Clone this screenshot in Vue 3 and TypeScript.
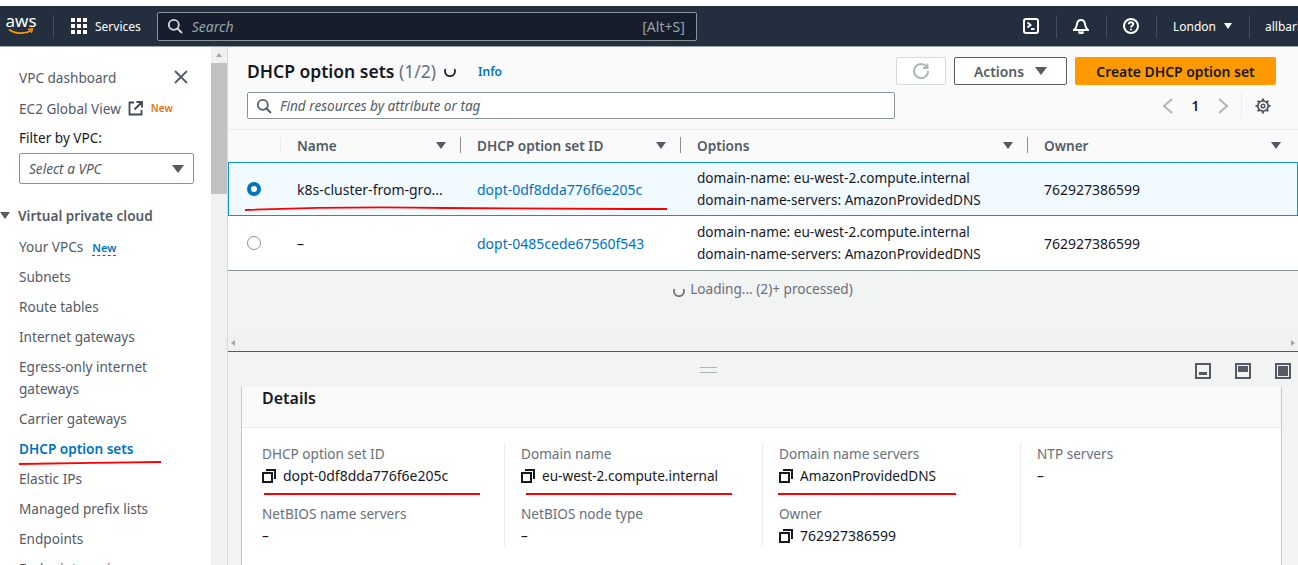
<template>
  <div class="page">
    <div class="top-strip"></div>
    <header class="nav">
      <div class="logo">
        <span class="logo-text">aws</span>
        <svg class="smile" width="26" height="8" viewBox="0 0 26 8"><path d="M1 1.5C7 6 17 6.5 23 2.5" fill="none" stroke="#f90" stroke-width="1.7"/><path d="M20 1.2l4.4-.4-1 4" fill="none" stroke="#f90" stroke-width="1.4"/></svg>
      </div>
      <span class="nav-sep first"></span>
      <svg class="grid-icon" width="16" height="16" viewBox="0 0 16 16" fill="#fff">
        <rect v-for="c in gridCells" :key="c.x + '-' + c.y" :x="c.x" :y="c.y" width="4" height="4" />
      </svg>
      <span class="services">Services</span>
      <div class="search">
        <svg width="16" height="16" viewBox="0 0 16 16" fill="none" stroke="#d5dbdb" stroke-width="1.8"><circle cx="6.8" cy="6.8" r="5"/><path d="M10.5 10.5 15 15"/></svg>
        <span class="search-text">Search</span>
        <span class="search-key">[Alt+S]</span>
      </div>
      <div class="nav-right">
        <svg class="nav-icon" width="16" height="16" viewBox="0 0 16 16" fill="none" stroke="#fff" stroke-width="2"><rect x="1" y="1" width="14" height="14" rx="2"/><path d="M4.5 4.5 7.5 7l-3 2.5M8 11h3.5"/></svg>
        <span class="nav-sep"></span>
        <svg class="nav-icon" width="16" height="16" viewBox="0 0 16 16" fill="none" stroke="#fff" stroke-width="2"><path d="M1 12c2-1.400 2.600-3 2.800-5C4.100 4 5.600 2 8 2s3.900 2 4.200 5c.2 2 .8 3.600 2.800 5Z"/><path d="M6 13.500a2 2 0 0 0 4 0" fill="#fff"/></svg>
        <span class="nav-sep"></span>
        <svg class="nav-icon" width="16" height="16" viewBox="0 0 16 16" fill="none" stroke="#fff" stroke-width="2"><circle cx="8" cy="8" r="7"/><path d="M5.800 6.200C5.800 5 6.800 4.200 8 4.200s2.200.8 2.200 2C10.200 7.800 8 7.800 8 9.500"/><path d="M8 10.800v1.500"/></svg>
        <span class="nav-sep"></span>
        <span class="region">London</span>
        <span class="caret white"></span>
        <span class="nav-sep"></span>
        <span class="account">allbarbara</span>
      </div>
    </header>

    <div class="body">
      <aside class="sidebar">
        <div class="side-top">
          <span>VPC dashboard</span>
          <svg width="14" height="14" viewBox="0 0 14 14" fill="none" stroke="#545b64" stroke-width="1.800"><path d="M1 1l12 12M13 1 1 13"/></svg>
        </div>
        <div class="side-row">
          <span>EC2 Global View</span>
          <svg class="ext" width="15" height="15" viewBox="0 0 15 15" fill="none" stroke="#414750" stroke-width="1.800"><path d="M6 1.500H1.500v12h12V9M8.500 1h5.500v5.500M14 1 6.500 8.500"/></svg>
          <span class="new-orange">New</span>
        </div>
        <div class="side-label">Filter by VPC:</div>
        <div class="vpc-select">
          <span>Select a VPC</span>
          <span class="caret"></span>
        </div>
        <div class="section-head"><span class="caret section-caret"></span>Virtual private cloud</div>
        <ul class="side-list">
          <li v-for="item in navItems" :key="item" :class="{ active: item === 'DHCP option sets', two: item.length > 25 }">
            {{ item }}<span v-if="item === 'Your VPCs'" class="new-blue">New</span>
          </li>
        </ul>
      </aside>
      <div class="scroll-track">
        <span class="arrow-up"></span>
        <div class="scroll-thumb"></div>
      </div>

      <main class="main">
        <section class="upper">
          <div class="tbl-header">
            <div class="title-row">
              <h1 class="title">DHCP option sets <span class="count">(1/2)</span></h1>
              <svg class="spin" width="12" height="12" viewBox="0 0 12 12" fill="none" stroke="#16191f" stroke-width="1.700"><path d="M1.500 4a5 5 0 1 0 9 0"/></svg>
              <span class="info">Info</span>
              <button class="btn refresh">
                <svg width="18" height="18" viewBox="0 0 18 18" fill="none" stroke="#aab7b8" stroke-width="2"><path d="M15 5.500A7 7 0 1 0 16 9"/><path d="M15.500 1.500v4.500H11"/></svg>
              </button>
              <button class="btn actions">Actions<span class="caret"></span></button>
              <button class="btn create">Create DHCP option set</button>
            </div>
            <div class="filter-row">
              <div class="filter-input">
                <svg width="16" height="16" viewBox="0 0 16 16" fill="none" stroke="#545b64" stroke-width="1.800"><circle cx="6.800" cy="6.800" r="5"/><path d="M10.500 10.500 15 15"/></svg>
                <span>Find resources by attribute or tag</span>
              </div>
              <div class="pager">
                <svg width="12" height="16" viewBox="0 0 12 16" fill="none" stroke="#aab7b8" stroke-width="2"><path d="M10 1 2 8l8 7"/></svg>
                <span class="page-num">1</span>
                <svg width="12" height="16" viewBox="0 0 12 16" fill="none" stroke="#aab7b8" stroke-width="2"><path d="m2 1 8 7-8 7"/></svg>
                <span class="pager-sep"></span>
                <svg width="16" height="16" viewBox="0 0 16 16" fill="none" stroke="#545b64"><circle cx="8" cy="8" r="5.200" stroke-width="1.800"/><circle cx="8" cy="8" r="1.800" stroke-width="1.600"/><path stroke-width="2.200" d="M8 .5V3M8 13v2.500M.5 8H3M13 8h2.500M2.700 2.700l1.800 1.800M11.500 11.500l1.800 1.800M13.300 2.700l-1.800 1.800M4.500 11.500l-1.800 1.800"/></svg>
              </div>
            </div>
          </div>

          <div class="table">
            <div class="t-row t-head">
              <div class="th first-col"></div>
              <div v-for="col in columns" :key="col" class="th">
                <span>{{ col }}</span>
                <span class="sort"></span>
              </div>
            </div>
            <div v-for="row in rows" :key="row.id" class="t-row data" :class="{ selected: row.selected }">
              <div class="td first-col"><span class="radio" :class="{ on: row.selected }"></span></div>
              <div class="td num">{{ row.name }}</div>
              <div class="td link num">{{ row.id }}</div>
              <div class="td options">
                <div>domain-name: eu-west-2.compute.internal</div>
                <div>domain-name-servers: AmazonProvidedDNS</div>
              </div>
              <div class="td num">762927386599</div>
            </div>
          </div>

          <div class="loading">
            <svg width="12" height="12" viewBox="0 0 12 12" fill="none" stroke="#687078" stroke-width="1.700"><path d="M1.500 4a5 5 0 1 0 9 0"/></svg>
            <span>Loading... (2)+ processed)</span>
          </div>
          <div class="h-scroll"><span class="arrow-left"></span><span class="arrow-right"></span></div>
        </section>

        <div class="split-bar">
          <span class="handle"></span>
          <div class="split-icons">
            <svg v-for="p in splitIcons" :key="p.y + p.h" width="16" height="16" viewBox="0 0 16 16">
              <rect x="1" y="1" width="14" height="14" fill="none" stroke="#545b64" stroke-width="2"/>
              <rect :x="p.x" :y="p.y" :width="p.w" :height="p.h" fill="#545b64"/>
            </svg>
          </div>
        </div>

        <section class="details">
          <h2 class="details-title">Details</h2>
          <div class="details-grid">
            <div v-for="col in detailCols" :key="col[0].label" class="d-col">
              <div v-for="f in col" :key="f.label" class="field">
                <div class="f-label">{{ f.label }}</div>
                <div class="f-value" :class="{ num: f.num }">
                  <svg v-if="f.copy" width="14" height="14" viewBox="0 0 14 14" fill="none" stroke="#16191f" stroke-width="2"><rect x="1" y="4" width="9" height="9"/><path d="M4 1h9v9"/></svg>
                  <span>{{ f.value }}</span>
                </div>
              </div>
            </div>
          </div>
        </section>
      </main>
    </div>

    <!-- red pen marks drawn over the screenshot -->
    <svg class="marks" width="1298" height="565" viewBox="0 0 1298 565" fill="none" stroke="#f00" stroke-width="1.800">
      <path d="M245 210c80-3 140-3 200-2 80 1 150 1 222 1"/>
      <path d="M19 464c40-1 100-1 142-2"/>
      <path d="M264 494h216"/>
      <path d="M526 494h206"/>
      <path d="M778 494h178"/>
    </svg>
  </div>
</template>

<script setup lang="ts">
interface Row {
  name: string
  id: string
  selected: boolean
}

interface Field {
  label: string
  value: string
  copy?: boolean
  num?: boolean
}

const gridCells: { x: number; y: number }[] = []
for (let y = 0; y < 3; y++) {
  for (let x = 0; x < 3; x++) gridCells.push({ x: x * 6, y: y * 6 })
}

const navItems = [
  'Your VPCs',
  'Subnets',
  'Route tables',
  'Internet gateways',
  'Egress-only internet gateways',
  'Carrier gateways',
  'DHCP option sets',
  'Elastic IPs',
  'Managed prefix lists',
  'Endpoints',
  'Endpoint services'
]

const columns = ['Name', 'DHCP option set ID', 'Options', 'Owner']

const rows: Row[] = [
  { name: 'k8s-cluster-from-gro...', id: 'dopt-0df8dda776f6e205c', selected: true },
  { name: '–', id: 'dopt-0485cede67560f543', selected: false }
]

const splitIcons = [
  { x: 4, y: 9, w: 8, h: 3 },
  { x: 3, y: 3, w: 10, h: 6 },
  { x: 3, y: 3, w: 10, h: 10 }
]

const detailCols: Field[][] = [
  [
    { label: 'DHCP option set ID', value: 'dopt-0df8dda776f6e205c', copy: true, num: true },
    { label: 'NetBIOS name servers', value: '–' }
  ],
  [
    { label: 'Domain name', value: 'eu-west-2.compute.internal', copy: true },
    { label: 'NetBIOS node type', value: '–' }
  ],
  [
    { label: 'Domain name servers', value: 'AmazonProvidedDNS', copy: true },
    { label: 'Owner', value: '762927386599', copy: true, num: true }
  ],
  [{ label: 'NTP servers', value: '–' }]
]
</script>

<style>
html,
body {
  margin: 0;
  overflow: hidden;
}
</style>

<style scoped>
.page {
  position: relative;
  width: 1298px;
  height: 565px;
  overflow: hidden;
  display: flex;
  flex-direction: column;
  font-family: "Noto Sans", "Open Sans", sans-serif;
  font-size: 13.6px;
  color: #16191f;
  background: #f2f3f3;
}

.num {
  font-size: 14px;
}

.top-strip {
  height: 6px;
  flex: none;
  background: #fff;
}

.nav {
  flex: none;
  height: 41px;
  display: flex;
  align-items: center;
  background: #232f3e;
  color: #fff;
  border-bottom: 1px solid #9aa3ab;
  box-sizing: border-box;
  padding-left: 6px;
}

.logo {
  width: 30px;
  display: flex;
  flex-direction: column;
  align-items: center;
  line-height: 1;
}

.logo-text {
  font-size: 17px;
  line-height: 14px;
  margin-top: -3px;
}

.nav-sep {
  width: 1px;
  height: 23px;
  flex: none;
  background: #414d5c;
}

.nav-sep.first {
  margin-left: 17px;
}

.grid-icon {
  margin-left: 17px;
}

.services {
  margin-left: 8px;
  font-size: 12px;
  color: #fff;
}

.search {
  width: 540px;
  height: 29px;
  margin-left: 16px;
  box-sizing: border-box;
  padding: 0 11px 0 9px;
  display: flex;
  align-items: center;
  background: #161e2d;
  border: 1px solid #879596;
  border-radius: 2px;
}

.search-text {
  margin-left: 9px;
  font-size: 14px;
  font-style: italic;
  color: #95a5a6;
}

.search-key {
  margin-left: auto;
  font-size: 14px;
  color: #95a5a6;
}

.nav-right {
  margin-left: auto;
  width: 291px;
  flex: none;
  display: flex;
  align-items: center;
}

.nav-icon {
  margin: 0 17px 0 16px;
  flex: none;
}

.region {
  margin-left: 16px;
  font-size: 12px;
}

.caret {
  display: inline-block;
  width: 0;
  height: 0;
  border-left: 6px solid transparent;
  border-right: 6px solid transparent;
  border-top: 8px solid #545b64;
}

.caret.white {
  border-left-width: 4px;
  border-right-width: 4px;
  border-top: 6px solid #fff;
  margin: 0 17px 0 8px;
}

.account {
  margin-left: 15px;
  font-size: 12px;
  white-space: nowrap;
}

.body {
  flex: 1;
  display: flex;
  min-height: 0;
}

.sidebar {
  width: 211px;
  flex: none;
  background: #fff;
  box-sizing: border-box;
  padding: 19px 0 0 19px;
  color: #545b64;
}

.side-top {
  display: flex;
  align-items: center;
  justify-content: space-between;
  height: 22px;
  padding-right: 23px;
}

.side-row {
  display: flex;
  align-items: center;
  height: 22px;
  margin-top: 9px;
}

.ext {
  margin-left: 7px;
}

.new-orange {
  margin-left: 8px;
  font-size: 10px;
  font-weight: 600;
  color: #ec7211;
}

.side-label {
  margin-top: 8px;
  line-height: 22px;
  color: #16191f;
}

.vpc-select {
  width: 175px;
  height: 31px;
  margin-top: 4px;
  box-sizing: border-box;
  padding: 0 9px;
  display: flex;
  align-items: center;
  justify-content: space-between;
  border: 1px solid #879596;
  border-radius: 2px;
  font-style: italic;
}

.section-head {
  margin: 20px 0 0 -19px;
  display: flex;
  align-items: center;
  height: 22px;
  font-weight: 600;
}

.section-caret {
  margin-right: 8px;
  border-left-width: 5px;
  border-right-width: 5px;
  border-top-width: 7px;
}

.side-list {
  list-style: none;
  margin: 10px 0 0;
  padding: 0 40px 0 0;
}

.side-list li {
  height: 22px;
  line-height: 22px;
  margin-bottom: 8px;
}

.side-list li.two {
  height: 44px;
}

.side-list li.active {
  font-weight: 600;
  color: #0073bb;
}

.new-blue {
  margin-left: 9px;
  font-size: 11px;
  font-weight: 600;
  line-height: 1;
  color: #0073bb;
  border-bottom: 1px dashed #0073bb;
}

.scroll-track {
  width: 16px;
  flex: none;
  background: #f1f1f1;
  border-right: 1px solid #d5dbdb;
  display: flex;
  flex-direction: column;
  align-items: center;
}

.arrow-up {
  margin-top: 6px;
  border-left: 3px solid transparent;
  border-right: 3px solid transparent;
  border-bottom: 4px solid #a3a3a3;
}

.scroll-thumb {
  width: 100%;
  height: 131px;
  margin-top: 6px;
  background: #c1c1c1;
}

.main {
  flex: 1;
  min-width: 0;
  display: flex;
  flex-direction: column;
}

.upper {
  flex: none;
  display: flex;
  flex-direction: column;
  border-bottom: 1px solid #545b64;
}

.tbl-header {
  height: 82px;
  box-sizing: border-box;
  padding: 10px 22px 0 19px;
  background: #fafafa;
}

.title-row {
  display: flex;
  align-items: center;
  height: 28px;
}

.title {
  margin: 0;
  font-size: 17.5px;
  font-weight: 600;
  line-height: 28px;
}

.count {
  font-weight: 400;
  color: #687078;
}

.spin {
  margin-left: 8px;
}

.info {
  margin-left: 22px;
  font-size: 12px;
  font-weight: 600;
  color: #0073bb;
}

.btn {
  height: 28px;
  box-sizing: border-box;
  border-radius: 2px;
  font-family: inherit;
  font-size: 13.9px;
  font-weight: 600;
  display: flex;
  align-items: center;
  justify-content: center;
  padding: 0;
}

.refresh {
  width: 50px;
  margin-left: auto;
  background: #fff;
  border: 1px solid #d5dbdb;
}

.actions {
  width: 113px;
  margin-left: 8px;
  gap: 11px;
  background: #fff;
  border: 1px solid #545b64;
  color: #545b64;
}

.create {
  width: 201px;
  margin-left: 8px;
  background: #f90;
  border: 1px solid #f90;
  color: #16191f;
}

.filter-row {
  display: flex;
  align-items: center;
  margin-top: 7px;
}

.filter-input {
  width: 648px;
  height: 27px;
  box-sizing: border-box;
  padding: 0 8px;
  display: flex;
  align-items: center;
  gap: 8px;
  background: #fff;
  border: 1px solid #879596;
  border-radius: 2px;
  font-style: italic;
  color: #545b64;
}

.pager {
  margin-left: auto;
  display: flex;
  align-items: center;
  margin-right: 5px;
  height: 27px;
}

.page-num {
  width: 43px;
  text-align: center;
  font-weight: 600;
}

.pager-sep {
  width: 1px;
  height: 27px;
  background: #eaeded;
  margin: 0 13px 0 12px;
}

.t-row {
  display: grid;
  grid-template-columns: 53px 180px 220px 347px 1fr;
  background: #fff;
}

.t-head {
  height: 33px;
  background: #fafafa;
  border-top: 1px solid #eaeded;
  padding-bottom: 2px;
  box-sizing: border-box;
  align-items: center;
  font-weight: 600;
  color: #545b64;
}

.th {
  display: flex;
  align-items: center;
  justify-content: space-between;
  padding: 0 14px 0 16px;
  border-right: 1px solid #879596;
  height: 16px;
  box-sizing: border-box;
}

.th:last-child {
  border-right: 0;
  padding-right: 17px;
}

.th.first-col {
  border-right-color: #eaeded;
}

.sort {
  border-left: 5px solid transparent;
  border-right: 5px solid transparent;
  border-top: 7px solid #545b64;
}

.data {
  height: 55px;
  box-sizing: border-box;
  align-items: center;
  border-bottom: 1px solid #879596;
}

.data.selected {
  height: 54px;
  background: #f1faff;
  border-bottom: 0;
  box-shadow: inset 0 0 0 1px #0a97b8;
}

.td {
  padding: 0 16px;
  white-space: nowrap;
  color: #16191f;
}

.td.link {
  color: #0073bb;
}

.td.options {
  line-height: 22px;
}

.first-col {
  padding: 0;
}

.radio {
  display: block;
  width: 14px;
  height: 14px;
  margin-left: 19px;
  margin-top: -1px;
  box-sizing: border-box;
  border: 1px solid #879596;
  border-radius: 50%;
  background: #fff;
}

.radio.on {
  border: 4px solid #0073bb;
}

.loading {
  height: 64px;
  box-sizing: border-box;
  padding-top: 8px;
  display: flex;
  align-items: flex-start;
  justify-content: center;
  gap: 5px;
  line-height: 20px;
  color: #687078;
  background: #f2f3f3;
}

.loading svg {
  margin-top: 6px;
}

.h-scroll {
  height: 16px;
  display: flex;
  align-items: center;
  justify-content: space-between;
  padding: 0 3px;
  background: #f1f1f1;
}

.arrow-left {
  border-top: 3px solid transparent;
  border-bottom: 3px solid transparent;
  border-right: 4px solid #a3a3a3;
}

.arrow-right {
  border-top: 3px solid transparent;
  border-bottom: 3px solid transparent;
  border-left: 4px solid #a3a3a3;
}

.split-bar {
  flex: none;
  height: 35px;
  position: relative;
  display: flex;
  align-items: center;
  padding-left: 472px;
}

.handle {
  width: 17px;
  height: 4px;
  border-top: 1px solid #aab7b8;
  border-bottom: 1px solid #aab7b8;
}

.split-icons {
  position: absolute;
  right: 7px;
  top: 11px;
  display: flex;
  gap: 24px;
}

.details {
  width: 1041px;
  margin-left: 13px;
  flex: none;
  background: #fff;
  border-left: 1px solid #c6c6cd;
  border-right: 1px solid #c6c6cd;
  box-sizing: border-box;
  height: 178px;
}

.details-title {
  margin: 0;
  height: 41px;
  box-sizing: border-box;
  padding: 1px 20px 0;
  font-size: 16px;
  font-weight: 600;
  line-height: 21px;
  background: #fafafa;
  border-bottom: 1px solid #eaeded;
}

.details-grid {
  display: grid;
  grid-template-columns: 262px 258px 258px 1fr;
  margin-top: 15px;
  height: 103px;
}

.d-col {
  padding: 0 16px 0 20px;
  border-left: 1px solid #eaeded;
}

.d-col:first-child {
  border-left: 0;
}

.d-col + .d-col {
  padding-left: 16px;
}

.field {
  height: 60px;
}

.field:last-child {
  height: 43px;
}

.f-label {
  line-height: 22px;
  color: #687078;
}

.f-value {
  display: flex;
  align-items: center;
  gap: 7px;
  line-height: 22px;
  white-space: nowrap;
}

.marks {
  position: absolute;
  left: 0;
  top: 0;
  pointer-events: none;
}
</style>
